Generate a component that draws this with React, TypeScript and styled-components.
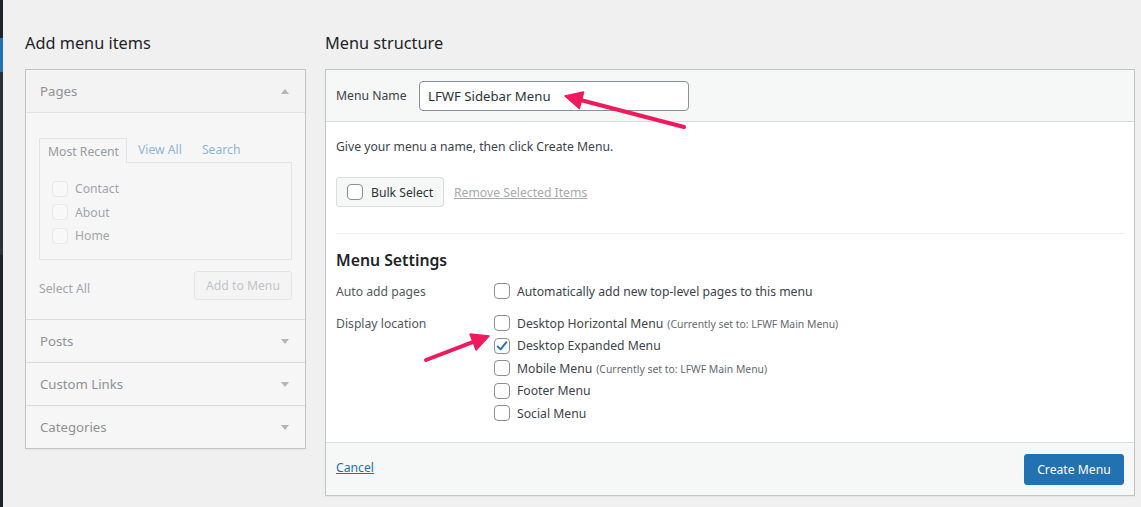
import React from 'react';
import styled, { createGlobalStyle } from 'styled-components';

const Global = createGlobalStyle`
  html, body { margin: 0; padding: 0; }
  body {
    background: #f0f0f1;
    font-family: "Noto Sans", "Open Sans", sans-serif;
    font-size: 12.2px;
    color: #3c434a;
    width: 1141px;
    height: 507px;
    overflow: hidden;
  }
`;

const Page = styled.div`
  position: relative;
  display: flex;
  height: 507px;
`;

const AdminStrip = styled.div`
  width: 3px;
  flex: none;
  display: flex;
  flex-direction: column;
`;

const StripPart = styled.div<{ $h: string; $c: string }>`
  height: ${p => p.$h};
  background: ${p => p.$c};
  flex: ${p => (p.$h === 'auto' ? '1' : 'none')};
`;

const Main = styled.div`
  display: flex;
  gap: 19px;
  padding: 31px 0 0 22px;
  align-items: flex-start;
`;

const Column = styled.div<{ $w: number }>`
  width: ${p => p.$w}px;
  display: flex;
  flex-direction: column;
`;

const ColumnTitle = styled.h2`
  margin: 0 0 14px;
  font-size: 16.3px;
  line-height: 24px;
  font-weight: 400;
  color: #1d2327;
`;

/* ---------- left accordion ---------- */

const Accordion = styled.div`
  border: 1px solid #c3c4c7;
  box-shadow: 0 1px 1px rgba(0, 0, 0, 0.04);
  background: #f6f6f7;
`;

const Section = styled.div<{ $last?: boolean }>`
  border-bottom: ${p => (p.$last ? 'none' : '1px solid #dcdcde')};
`;

const SectionTitle = styled.div<{ $open?: boolean }>`
  height: 42px;
  display: flex;
  align-items: center;
  justify-content: space-between;
  padding: 0 16px 0 14px;
  font-size: 13.2px;
  color: #8f9295;
  background: ${p => (p.$open ? '#f3f3f4' : '#f6f6f7')};
  border-bottom: ${p => (p.$open ? '1px solid #e4e4e6' : 'none')};
`;

const Caret = styled.span<{ $up?: boolean }>`
  width: 0;
  height: 0;
  border-left: 4px solid transparent;
  border-right: 4px solid transparent;
  ${p =>
    p.$up
      ? 'border-bottom: 5px solid #b3b5b8;'
      : 'border-top: 5px solid #b3b5b8;'}
`;

const SectionBody = styled.div`
  padding: 24px 13px 19px;
  background: #f6f6f7;
`;

const Tabs = styled.div`
  display: flex;
  align-items: flex-end;
  height: 25px;
`;

const ActiveTab = styled.div`
  height: 25px;
  box-sizing: border-box;
  border: 1px solid #e4e4e6;
  border-bottom: none;
  padding: 0 7px 0 8px;
  display: flex;
  align-items: center;
  color: #999b9e;
  background: #f6f6f7;
  margin-bottom: -1px;
  position: relative;
  z-index: 1;
`;

const TabLink = styled.span<{ $ml: number }>`
  margin-left: ${p => p.$ml}px;
  height: 25px;
  display: flex;
  align-items: center;
  color: #8fb6d6;
`;

const TabPanel = styled.div`
  border: 1px solid #e4e4e6;
  height: 98px;
  padding: 14px 12px 0;
  box-sizing: border-box;
`;

const PageRow = styled.div`
  height: 23.5px;
  display: flex;
  align-items: center;
  gap: 7px;
  color: #a3a5a8;
`;

const Controls = styled.div`
  margin-top: 11px;
  display: flex;
  align-items: center;
  justify-content: space-between;
  height: 29px;
`;

const SelectAll = styled.span`
  color: #a3a5a8;
  margin-top: 6px;
`;

const FadedButton = styled.span`
  height: 29px;
  box-sizing: border-box;
  width: 98px;
  border: 1px solid #e4e4e6;
  border-radius: 3px;
  background: #f4f4f5;
  color: #c3c4c7;
  display: flex;
  align-items: center;
  justify-content: center;
`;

/* ---------- right column ---------- */

const MenuBox = styled.div`
  border: 1px solid #c3c4c7;
  box-shadow: 0 1px 1px rgba(0, 0, 0, 0.04);
  background: #fff;
`;

const MenuHeader = styled.div`
  height: 51px;
  background: #f6f7f7;
  border-bottom: 1px solid #dcdcde;
  display: flex;
  align-items: center;
  padding: 0 10px;
`;

const NameLabel = styled.label`
  width: 83px;
  color: #3c434a;
`;

const NameInput = styled.div`
  width: 270px;
  height: 30px;
  box-sizing: border-box;
  border: 1px solid #8c8f94;
  border-radius: 4px;
  background: #fff;
  padding: 0 8px;
  display: flex;
  align-items: center;
  font-size: 13.2px;
  color: #2c3338;
`;

const MenuBody = styled.div`
  padding: 15px 10px 17.5px;
`;

const Hint = styled.p`
  margin: 0;
  line-height: 20px;
`;

const BulkRow = styled.div`
  margin-top: 20px;
  display: flex;
  align-items: center;
  gap: 10px;
`;

const BulkButton = styled.div`
  width: 108px;
  height: 30px;
  box-sizing: border-box;
  border: 1px solid #dcdcde;
  border-radius: 3px;
  background: #f6f7f7;
  display: flex;
  align-items: center;
  gap: 8px;
  padding-left: 10px;
  color: #2c3338;
`;

const DisabledLink = styled.span`
  color: #a7aaad;
  text-decoration: underline;
`;

const Divider = styled.hr`
  margin: 26px 0 0;
  border: none;
  border-top: 1px solid #f0f0f1;
`;

const SettingsTitle = styled.h3`
  margin: 14px 0 8px;
  font-size: 15.8px;
  line-height: 24px;
  font-weight: 600;
  color: #1d2327;
`;

const SettingRow = styled.div<{ $mb?: number }>`
  display: grid;
  grid-template-columns: 158px 1fr;
  margin-bottom: ${p => p.$mb ?? 0}px;
`;

const SettingLabel = styled.div`
  height: 22.5px;
  display: flex;
  align-items: center;
  color: #50575e;
`;

const Options = styled.div`
  display: flex;
  flex-direction: column;
`;

const Option = styled.div`
  height: 22.5px;
  display: flex;
  align-items: center;
  gap: 7px;
  color: #3c434a;
`;

const Note = styled.span`
  font-size: 10.4px;
  color: #646970;
  margin-left: 4px;
`;

const MenuFooter = styled.div`
  height: 52px;
  border-top: 1px solid #dcdcde;
  background: #f6f7f7;
  display: flex;
  align-items: center;
  justify-content: space-between;
  padding: 0 10px;
`;

const CancelLink = styled.span`
  color: #2271b1;
  text-decoration: underline;
  margin-top: -3px;
`;

const PrimaryButton = styled.span`
  width: 100px;
  height: 31px;
  box-sizing: border-box;
  border-radius: 3px;
  background: #2271b1;
  border: 1px solid #2271b1;
  color: #fff;
  display: flex;
  align-items: center;
  justify-content: center;
`;

const CheckBox = styled.span<{ $faded?: boolean }>`
  width: 16px;
  height: 16px;
  box-sizing: border-box;
  border: 1px solid ${p => (p.$faded ? '#e6e7e8' : '#8c8f94')};
  border-radius: 4px;
  background: ${p => (p.$faded ? '#f8f8f9' : '#fff')};
  display: inline-flex;
  align-items: center;
  justify-content: center;
  flex: none;
`;

const Overlay = styled.svg`
  position: absolute;
  left: 0;
  top: 0;
  pointer-events: none;
`;

const Check = ({ checked, faded }: { checked?: boolean; faded?: boolean }) => (
  <CheckBox $faded={faded}>
    {checked && (
      <svg width="14" height="14" viewBox="0 0 14 14">
        <path d="M2.6 7.4 L5.6 10.4 L11.4 3.2" fill="none" stroke="#2271b1" strokeWidth="1.9" strokeLinecap="round" strokeLinejoin="round" />
      </svg>
    )}
  </CheckBox>
);

const Arrow = ({ x1, y1, x2, y2 }: { x1: number; y1: number; x2: number; y2: number }) => {
  const dx = x2 - x1;
  const dy = y2 - y1;
  const len = Math.hypot(dx, dy);
  const ux = dx / len;
  const uy = dy / len;
  const hl = 17;
  const hw = 8.5;
  const bx = x2 - ux * hl;
  const by = y2 - uy * hl;
  const px = -uy * hw;
  const py = ux * hw;
  return (
    <g>
      <line x1={x1} y1={y1} x2={bx + ux * 3} y2={by + uy * 3} stroke="#ef1a5c" strokeWidth="4" strokeLinecap="round" />
      <polygon points={`${x2},${y2} ${bx + px},${by + py} ${bx - px},${by - py}`} fill="#ef1a5c" stroke="#ef1a5c" strokeWidth="1.5" strokeLinejoin="round" />
    </g>
  );
};

const pages = ['Contact', 'About', 'Home'];
const closedSections = ['Posts', 'Custom Links', 'Categories'];
const locations: { name: string; note?: string; checked?: boolean }[] = [
  { name: 'Desktop Horizontal Menu', note: '(Currently set to: LFWF Main Menu)' },
  { name: 'Desktop Expanded Menu', checked: true },
  { name: 'Mobile Menu', note: '(Currently set to: LFWF Main Menu)' },
  { name: 'Footer Menu' },
  { name: 'Social Menu' },
];

export default function App() {
  return (
    <>
      <Global />
      <Page>
        <AdminStrip>
          <StripPart $h="38px" $c="#1d2327" />
          <StripPart $h="34px" $c="#2271b1" />
          <StripPart $h="183px" $c="#2c3338" />
          <StripPart $h="auto" $c="#1d2327" />
        </AdminStrip>
        <Main>
          <Column $w={281}>
            <ColumnTitle>Add menu items</ColumnTitle>
            <Accordion>
              <Section>
                <SectionTitle $open>
                  Pages
                  <Caret $up />
                </SectionTitle>
                <SectionBody>
                  <Tabs>
                    <ActiveTab>Most Recent</ActiveTab>
                    <TabLink $ml={11}>View All</TabLink>
                    <TabLink $ml={20}>Search</TabLink>
                  </Tabs>
                  <TabPanel>
                    {pages.map(p => (
                      <PageRow key={p}>
                        <Check faded />
                        {p}
                      </PageRow>
                    ))}
                  </TabPanel>
                  <Controls>
                    <SelectAll>Select All</SelectAll>
                    <FadedButton>Add to Menu</FadedButton>
                  </Controls>
                </SectionBody>
              </Section>
              {closedSections.map((s, i) => (
                <Section key={s} $last={i === closedSections.length - 1}>
                  <SectionTitle>
                    {s}
                    <Caret />
                  </SectionTitle>
                </Section>
              ))}
            </Accordion>
          </Column>
          <Column $w={810}>
            <ColumnTitle>Menu structure</ColumnTitle>
            <MenuBox>
              <MenuHeader>
                <NameLabel>Menu Name</NameLabel>
                <NameInput>LFWF Sidebar Menu</NameInput>
              </MenuHeader>
              <MenuBody>
                <Hint>Give your menu a name, then click Create Menu.</Hint>
                <BulkRow>
                  <BulkButton>
                    <Check />
                    Bulk Select
                  </BulkButton>
                  <DisabledLink>Remove Selected Items</DisabledLink>
                </BulkRow>
                <Divider />
                <SettingsTitle>Menu Settings</SettingsTitle>
                <SettingRow $mb={9.5}>
                  <SettingLabel>Auto add pages</SettingLabel>
                  <Options>
                    <Option>
                      <Check />
                      Automatically add new top-level pages to this menu
                    </Option>
                  </Options>
                </SettingRow>
                <SettingRow>
                  <SettingLabel>Display location</SettingLabel>
                  <Options>
                    {locations.map(l => (
                      <Option key={l.name}>
                        <Check checked={l.checked} />
                        <span>
                          {l.name}
                          {l.note && <Note>{l.note}</Note>}
                        </span>
                      </Option>
                    ))}
                  </Options>
                </SettingRow>
              </MenuBody>
              <MenuFooter>
                <CancelLink>Cancel</CancelLink>
                <PrimaryButton>Create Menu</PrimaryButton>
              </MenuFooter>
            </MenuBox>
          </Column>
        </Main>
        <Overlay width="1141" height="507" viewBox="0 0 1141 507">
          <Arrow x1={684} y1={127} x2={565} y2={96} />
          <Arrow x1={426} y1={360} x2={489} y2={336} />
        </Overlay>
      </Page>
    </>
  );
}
